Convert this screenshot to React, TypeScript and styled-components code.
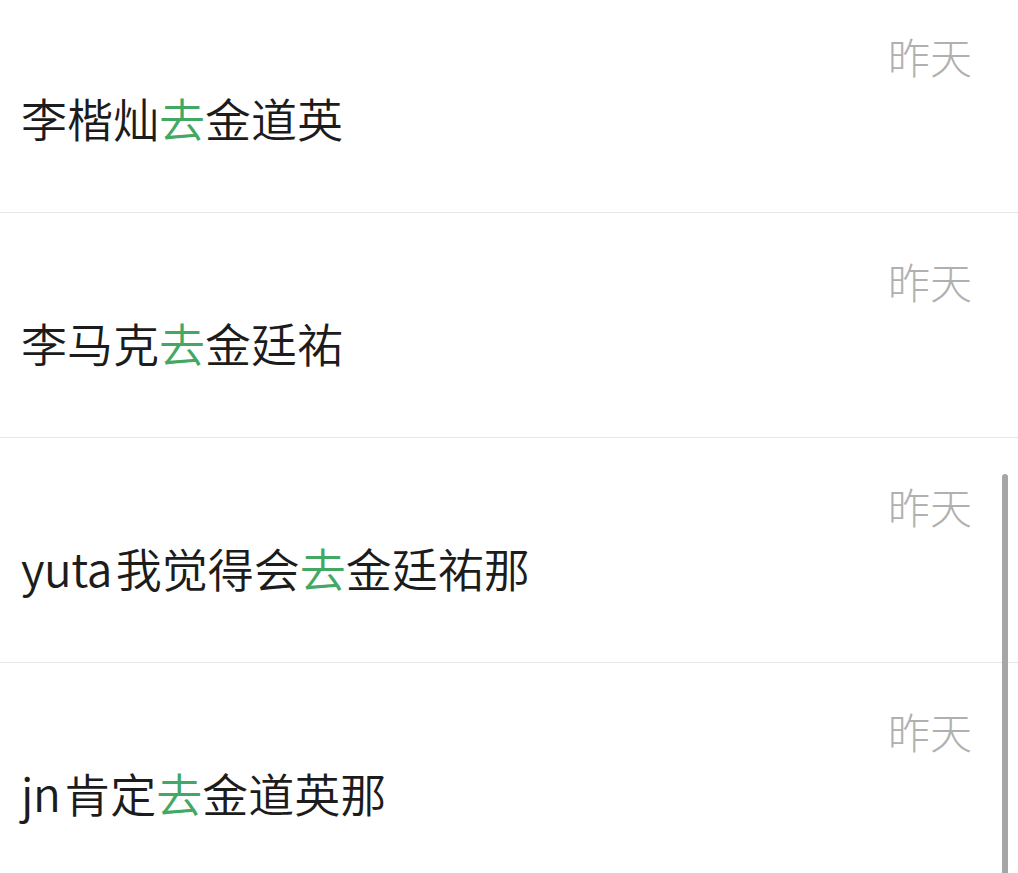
import React from 'react';
import styled, { createGlobalStyle } from 'styled-components';

const GlobalStyle = createGlobalStyle`
	html, body {
		margin: 0;
		padding: 0;
		background: #ffffff;
		overflow: hidden;
	}
	body {
		font-family: "Noto Sans CJK SC", "Noto Sans", sans-serif;
	}
`;

const Screen = styled.div`
	position: relative;
	width: 1018px;
	height: 873px;
	overflow: hidden;
	background: #ffffff;
`;

const List = styled.ul`
	list-style: none;
	margin: -12px 0 0;
	padding: 0;
`;

const Item = styled.li`
	height: 224px;
	border-bottom: 1px solid #e6e6e6;
	display: flex;
	flex-direction: column;
	padding: 0 46px 0 21px;
	box-sizing: content-box;
`;

const Time = styled.div`
	align-self: flex-end;
	margin-top: 44px;
	font-size: 42px;
	font-weight: 300;
	line-height: 48px;
	color: #b0b0b0;
`;

const Message = styled.div`
	margin-top: 12px;
	font-size: 46px;
	font-weight: 350;
	line-height: 50px;
	color: #1c1c1c;
`;

const Name = styled.span`
	margin-right: 4px;
	letter-spacing: -0.5px;
`;

const Keyword = styled.span`
	color: #43a863;
`;

const Scrollbar = styled.div`
	position: absolute;
	right: 10px;
	top: 474px;
	bottom: 0;
	width: 6px;
	border-radius: 3px 3px 0 0;
	background: #a6a6a6;
`;

const rows = [
	{ name: '', before: '李楷灿', after: '金道英' },
	{ name: '', before: '李马克', after: '金廷祐' },
	{ name: 'yuta', before: '我觉得会', after: '金廷祐那' },
	{ name: 'jn', before: '肯定', after: '金道英那' },
];

const App = () => {
	return (
		<Screen>
			<GlobalStyle />
			<List>
				{rows.map((row, i) => (
					<Item key={i}>
						<Time>昨天</Time>
						<Message>
							{row.name && <Name>{row.name}</Name>}
							{row.before}<Keyword>去</Keyword>{row.after}
						</Message>
					</Item>
				))}
			</List>
			<Scrollbar />
		</Screen>
	);
};

export default App;
